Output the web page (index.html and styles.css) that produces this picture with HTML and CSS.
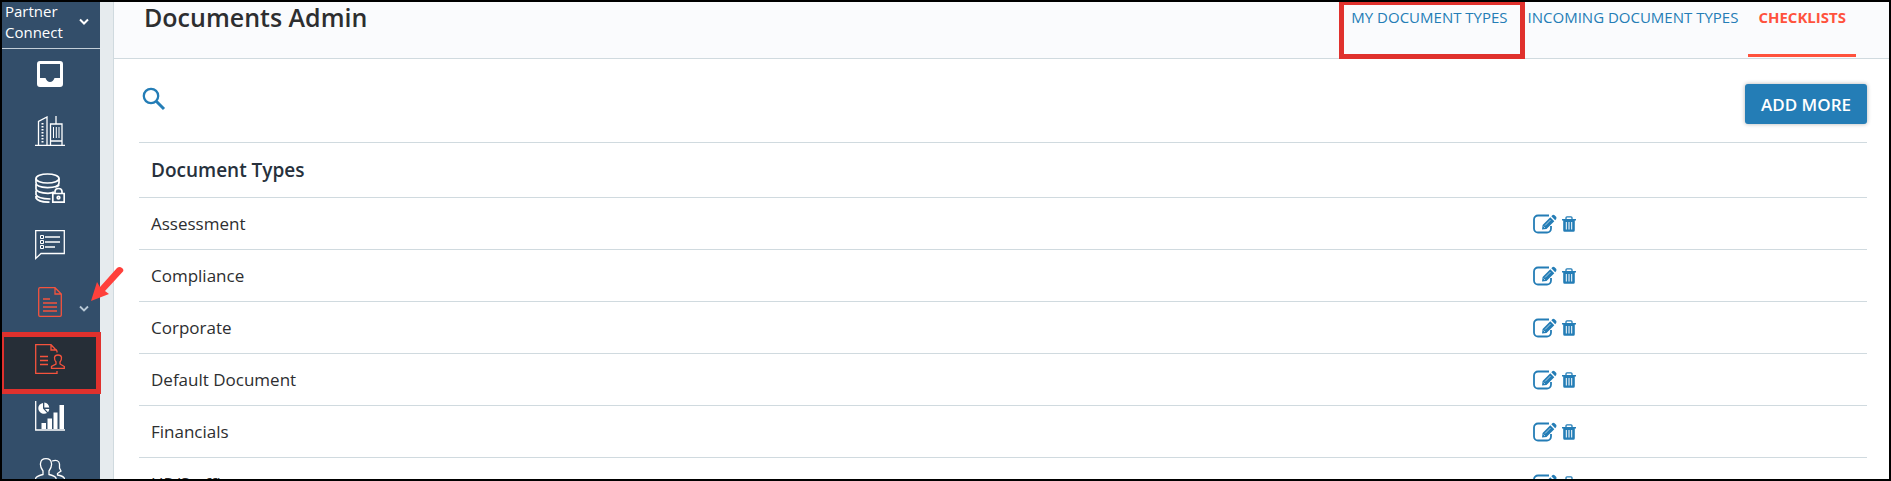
FILE: index.html
```
<!DOCTYPE html>
<html lang="en">
<head>
  <meta charset="UTF-8" />
  <meta name="viewport" content="width=device-width, initial-scale=1.0"/>
  <title>Documents Admin</title>
  <link rel="stylesheet" href="styles.css">
</head>
<body>
  <svg class="sprite" aria-hidden="true">
    <symbol id="edit" viewBox="0 0 24 20">
      <path d="M16 1.500H5A4 4 0 0 0 1 5.500V14.500A4 4 0 0 0 5 18.500H14A4 4 0 0 0 18 14.500V12" fill="none" stroke="currentColor" stroke-width="1.800"/>
      <path d="M9 15.500L9.600 11L17.300 3.300L21.300 7.300L13.500 15ZM18.300 2.300L19.600 1Q20.600 .4 21.600 1.300L23.100 2.800Q23.900 3.800 23.200 5L22.200 6.200Z" fill="currentColor"/>
      <path d="M12 11.500L17.500 6M10.500 12.500L12 14" stroke="#fff" stroke-width=".6"/>
    </symbol>
    <symbol id="trash" viewBox="0 0 14 16">
      <path d="M0 3H14V4.600H0ZM1.200 4H12.800V14.200Q12.800 15.700 11.400 15.700H2.600Q1.200 15.700 1.200 14.200Z" fill="currentColor"/>
      <path d="M4 3V1.800Q4 .8 5 .8H9Q10 .8 10 1.800V3" fill="none" stroke="currentColor" stroke-width="1.300"/>
      <path d="M4.300 6V13.500M7 6V13.500M9.700 6V13.500" stroke="#fff" stroke-width="1"/>
    </symbol>
  </svg>

  <div class="app">
    <aside class="sidebar">
      <button class="brand" type="button">
        <span>Partner Connect</span>
        <svg width="12" height="8" viewBox="0 0 12 8"><path d="M2 1.500L6 5.500L10 1.500" fill="none" stroke="currentColor" stroke-width="2"/></svg>
      </button>
      <nav class="menu">
        <a href="#" aria-label="Inbox">
          <svg width="30" height="30" viewBox="0 0 30 30"><path fill="currentColor" fill-rule="evenodd" d="M5 2H25Q28 2 28 5V25Q28 28 25 28H5Q2 28 2 25V5Q2 2 5 2ZM5 5V19H10.500Q12 23 15 23T19.500 19H25V5Z"/></svg>
        </a>
        <a href="#" aria-label="Companies">
          <svg width="30" height="30" viewBox="0 0 30 30" fill="none" stroke="currentColor"><path d="M0 29.500H30M3.500 29V5.500L12 1V29M15.500 29V8H27V29M15.500 25H27M21 8V0" stroke-width="1.300"/><path d="M18.500 11V22M21.300 11V22M24 11V22"/><path d="M7.500 7V28" stroke-width="2" stroke-dasharray="1.500 1.500"/></svg>
        </a>
        <a href="#" aria-label="Secure data">
          <svg width="30" height="30" viewBox="0 0 30 30" fill="none" stroke="currentColor" stroke-width="1.700"><ellipse cx="12.500" cy="5.500" rx="11.500" ry="4.500"/><path d="M1 5.500V10Q1 14 12.500 14.700Q24 14.300 24 10V5.500M1 11V16Q2 20 13 20.300Q17 20.300 19 19M1 17.500V21.500Q2 25.500 15.500 26M1 23V25Q3 29 14.500 29.200M20 14Q23.500 13.500 24 11.500"/><path d="M17.800 20.500H29.200V29.200H17.800ZM20 20.500V18.500Q20 15.500 23.500 15.500T27 18.500V20.500"/><circle cx="23.500" cy="24.700" r="1.300"/></svg>
        </a>
        <a href="#" aria-label="Messages">
          <svg width="30" height="30" viewBox="0 0 30 30" fill="none" stroke="currentColor"><path d="M.7 28.500V.7H29.300V23.500H6Z" stroke-width="1.300"/><path d="M5.500 5.500H8.500V8.500H5.500ZM5.500 10.500H8.500V13.500H5.500ZM5.500 15.500H8.500V18.500H5.500Z"/><path d="M10 7H25M10 12H25M10 17H20" stroke-width="1.500"/></svg>
        </a>
        <a class="red" href="#" aria-label="Documents">
          <svg width="30" height="30" viewBox="0 0 30 30" fill="none" stroke="currentColor" stroke-width="1.300"><path d="M20 .7H5Q3.700 .7 3.700 2V28Q3.700 29.300 5 29.300H25Q26.300 29.300 26.300 28V7ZM20 .7V7H26.300M8 12H15M8 16H22M8 20H22M8 24H22"/></svg>
          <svg class="caret" width="12" height="8" viewBox="0 0 12 8"><path d="M2 1.500L6 5.500L10 1.500" fill="none" stroke="currentColor" stroke-width="1.800"/></svg>
        </a>
        <a class="red active" href="#" aria-label="Documents Admin">
          <svg width="30" height="30" viewBox="0 0 30 30" fill="none" stroke="currentColor" stroke-width="1.300"><path d="M22 8.500V7L16 .7H.7V29.300H22V27M16 .7V6H22M5 12.500H13M5 16.500H13M5 20.500H13"/><path d="M16.500 24.300V22.500L21 20V18Q19.300 16 19.500 13.500Q19.800 11 23 11T26.500 13.500Q26.700 16 25 18V20L29.300 22.500V24.300Z"/></svg>
        </a>
        <a href="#" aria-label="Reports">
          <svg width="30" height="30" viewBox="0 0 30 30"><path d="M.7 0V29H30" fill="none" stroke="currentColor" stroke-width="1.300"/><path d="M6.500 22H11V28H6.500ZM12.500 17.500H17V28H12.500ZM18.500 11.500H22.500V28H18.500ZM24.500 4H29V28H24.500ZM8 2V7.500L12 12Q9.500 13.500 6.500 12.200Q3.300 10.500 3.300 7Q3.500 3 8 2ZM9.300 1.500Q13.500 1.800 14.300 6.500H9.300ZM10 8H14.300Q14 10 13 11.200Z" fill="currentColor"/></svg>
        </a>
        <a href="#" aria-label="Users">
          <svg width="30" height="30" viewBox="0 0 30 30" fill="none" stroke="currentColor" stroke-width="1.300"><path d="M.7 25V20Q2 18 8 16.500V13Q5 9 5.500 5.500Q6 .7 11 .7T16.500 5.500Q17 9 14 13V16.500Q20 18 21 20V25ZM17 3Q24 1 24.500 6V10L26 13L22.500 15.500V17Q28 18 29.300 20V25H21"/></svg>
        </a>
      </nav>
      <svg class="pointer" width="34" height="37" viewBox="0 0 34 37" aria-hidden="true"><path d="M1 35L7 16L10 21L27 2Q29.500 0 32 2T32.500 6L15 25L19 28Z" fill="#ff403b"/></svg>
    </aside>

    <main class="main">
      <header class="page-header">
        <h1>Documents Admin</h1>
        <nav class="tabs">
          <a class="marked" href="#">MY DOCUMENT TYPES</a>
          <a href="#">INCOMING DOCUMENT TYPES</a>
          <a class="current" href="#">CHECKLISTS</a>
        </nav>
      </header>
      <div class="toolbar">
        <button class="search" type="button" aria-label="Search">
          <svg width="24" height="24" viewBox="0 0 24 24" fill="none" stroke="currentColor"><circle cx="9" cy="9" r="7.200" stroke-width="2.300"/><path d="M14.500 14.500L22 22" stroke-width="3"/></svg>
        </button>
        <button class="add" type="button">ADD MORE</button>
      </div>
      <table class="types">
        <thead>
          <tr><th>Document Types</th><th></th></tr>
        </thead>
        <tbody>
          <tr>
            <td>Assessment</td>
            <td><div class="actions"><button type="button" aria-label="Edit"><svg width="24" height="20"><use href="#edit"/></svg></button><button type="button" aria-label="Delete"><svg width="14" height="16"><use href="#trash"/></svg></button></div></td>
          </tr>
          <tr>
            <td>Compliance</td>
            <td><div class="actions"><button type="button" aria-label="Edit"><svg width="24" height="20"><use href="#edit"/></svg></button><button type="button" aria-label="Delete"><svg width="14" height="16"><use href="#trash"/></svg></button></div></td>
          </tr>
          <tr>
            <td>Corporate</td>
            <td><div class="actions"><button type="button" aria-label="Edit"><svg width="24" height="20"><use href="#edit"/></svg></button><button type="button" aria-label="Delete"><svg width="14" height="16"><use href="#trash"/></svg></button></div></td>
          </tr>
          <tr>
            <td>Default Document</td>
            <td><div class="actions"><button type="button" aria-label="Edit"><svg width="24" height="20"><use href="#edit"/></svg></button><button type="button" aria-label="Delete"><svg width="14" height="16"><use href="#trash"/></svg></button></div></td>
          </tr>
          <tr>
            <td>Financials</td>
            <td><div class="actions"><button type="button" aria-label="Edit"><svg width="24" height="20"><use href="#edit"/></svg></button><button type="button" aria-label="Delete"><svg width="14" height="16"><use href="#trash"/></svg></button></div></td>
          </tr>
          <tr>
            <td>HR/Staffing</td>
            <td><div class="actions"><button type="button" aria-label="Edit"><svg width="24" height="20"><use href="#edit"/></svg></button><button type="button" aria-label="Delete"><svg width="14" height="16"><use href="#trash"/></svg></button></div></td>
          </tr>
        </tbody>
      </table>
    </main>
  </div>
</body>
</html>
```
FILE: styles.css
```
* { box-sizing: border-box; }
body { margin: 0; font-family: "Open Sans", "Noto Sans", sans-serif; color: #2d2e30; background: #fff; }
button { font: inherit; color: inherit; border: 0; padding: 0; background: none; cursor: pointer; }
a { text-decoration: none; }
svg { display: block; flex: none; }
.sprite { position: absolute; width: 0; height: 0; }
.app { display: flex; height: 100vh; border: 2px solid #000; overflow: hidden; }

/* sidebar */
.sidebar { position: relative; flex: none; width: 98px; background: #334e6a; color: #fff; }
.brand { display: flex; align-items: center; justify-content: space-between; width: 100%; height: 47px; padding: 0 10px 7px 3px; border-bottom: 1px solid #c3ced8; font-size: 15px; line-height: 21px; text-align: left; }
.menu { display: flex; flex-direction: column; gap: 27px; padding-top: 10px; }
.menu a { position: relative; display: flex; justify-content: center; padding-right: 2px; color: #fff; }
.menu .red { color: #f5533d; }
.menu .active { z-index: 1; }
.menu .active::before { content: ""; position: absolute; z-index: -1; inset: -12px -1px -20px 0; background: #262e37; border: 5px solid #e0312d; border-left-width: 2px; }
.caret { position: absolute; right: 10px; bottom: 4px; color: #b9c9d6; }
.pointer { position: absolute; left: 88px; top: 264px; z-index: 2; }

/* content */
.main { flex: 1; min-width: 0; margin-left: 13px; border-left: 1px solid #d0dadf; box-shadow: -13px 0 0 #e6ebee; }
.page-header { display: flex; justify-content: space-between; height: 57px; padding: 0 33px 0 30px; background: #fafbfd; border-bottom: 1px solid #d0dadf; }
h1 { margin: 0; font-size: 25px; line-height: 30px; font-weight: 600; }
.tabs { display: flex; }
.tabs a { position: relative; padding: 5px 10px 0; font-size: 15px; line-height: 21px; color: #247db6; }
.tabs .current { height: 55px; font-weight: 700; color: #ff523d; border-bottom: 3px solid #ff523d; }
.tabs .marked::after { content: ""; position: absolute; inset: -2px -7px -1px -2px; border: 5px solid #e0312d; }
.toolbar { display: flex; align-items: flex-start; justify-content: space-between; height: 83px; padding: 25px 22px 0 28px; }
.search { margin-top: 3px; color: #247db6; }
.add { height: 40px; padding: 0 16px; border-radius: 3px; background: #247db6; color: #fff; font-size: 17px; font-weight: 600; box-shadow: 0 0 4px rgba(0,0,0,0.3); }
.types { width: calc(100% - 47px); margin-left: 25px; border-collapse: collapse; table-layout: fixed; font-size: 17px; line-height: 24px; border-top: 1px solid #d0dadf; }
.types th, .types td { height: 52px; padding: 0 12px; border-bottom: 1px solid #d0dadf; text-align: left; }
.types th { height: 55px; font-size: 19px; font-weight: 600; color: #27313c; }
.types th:first-child { width: 80%; }
.actions { display: flex; align-items: center; gap: 5px; }
.actions button { color: #247db6; }
```
